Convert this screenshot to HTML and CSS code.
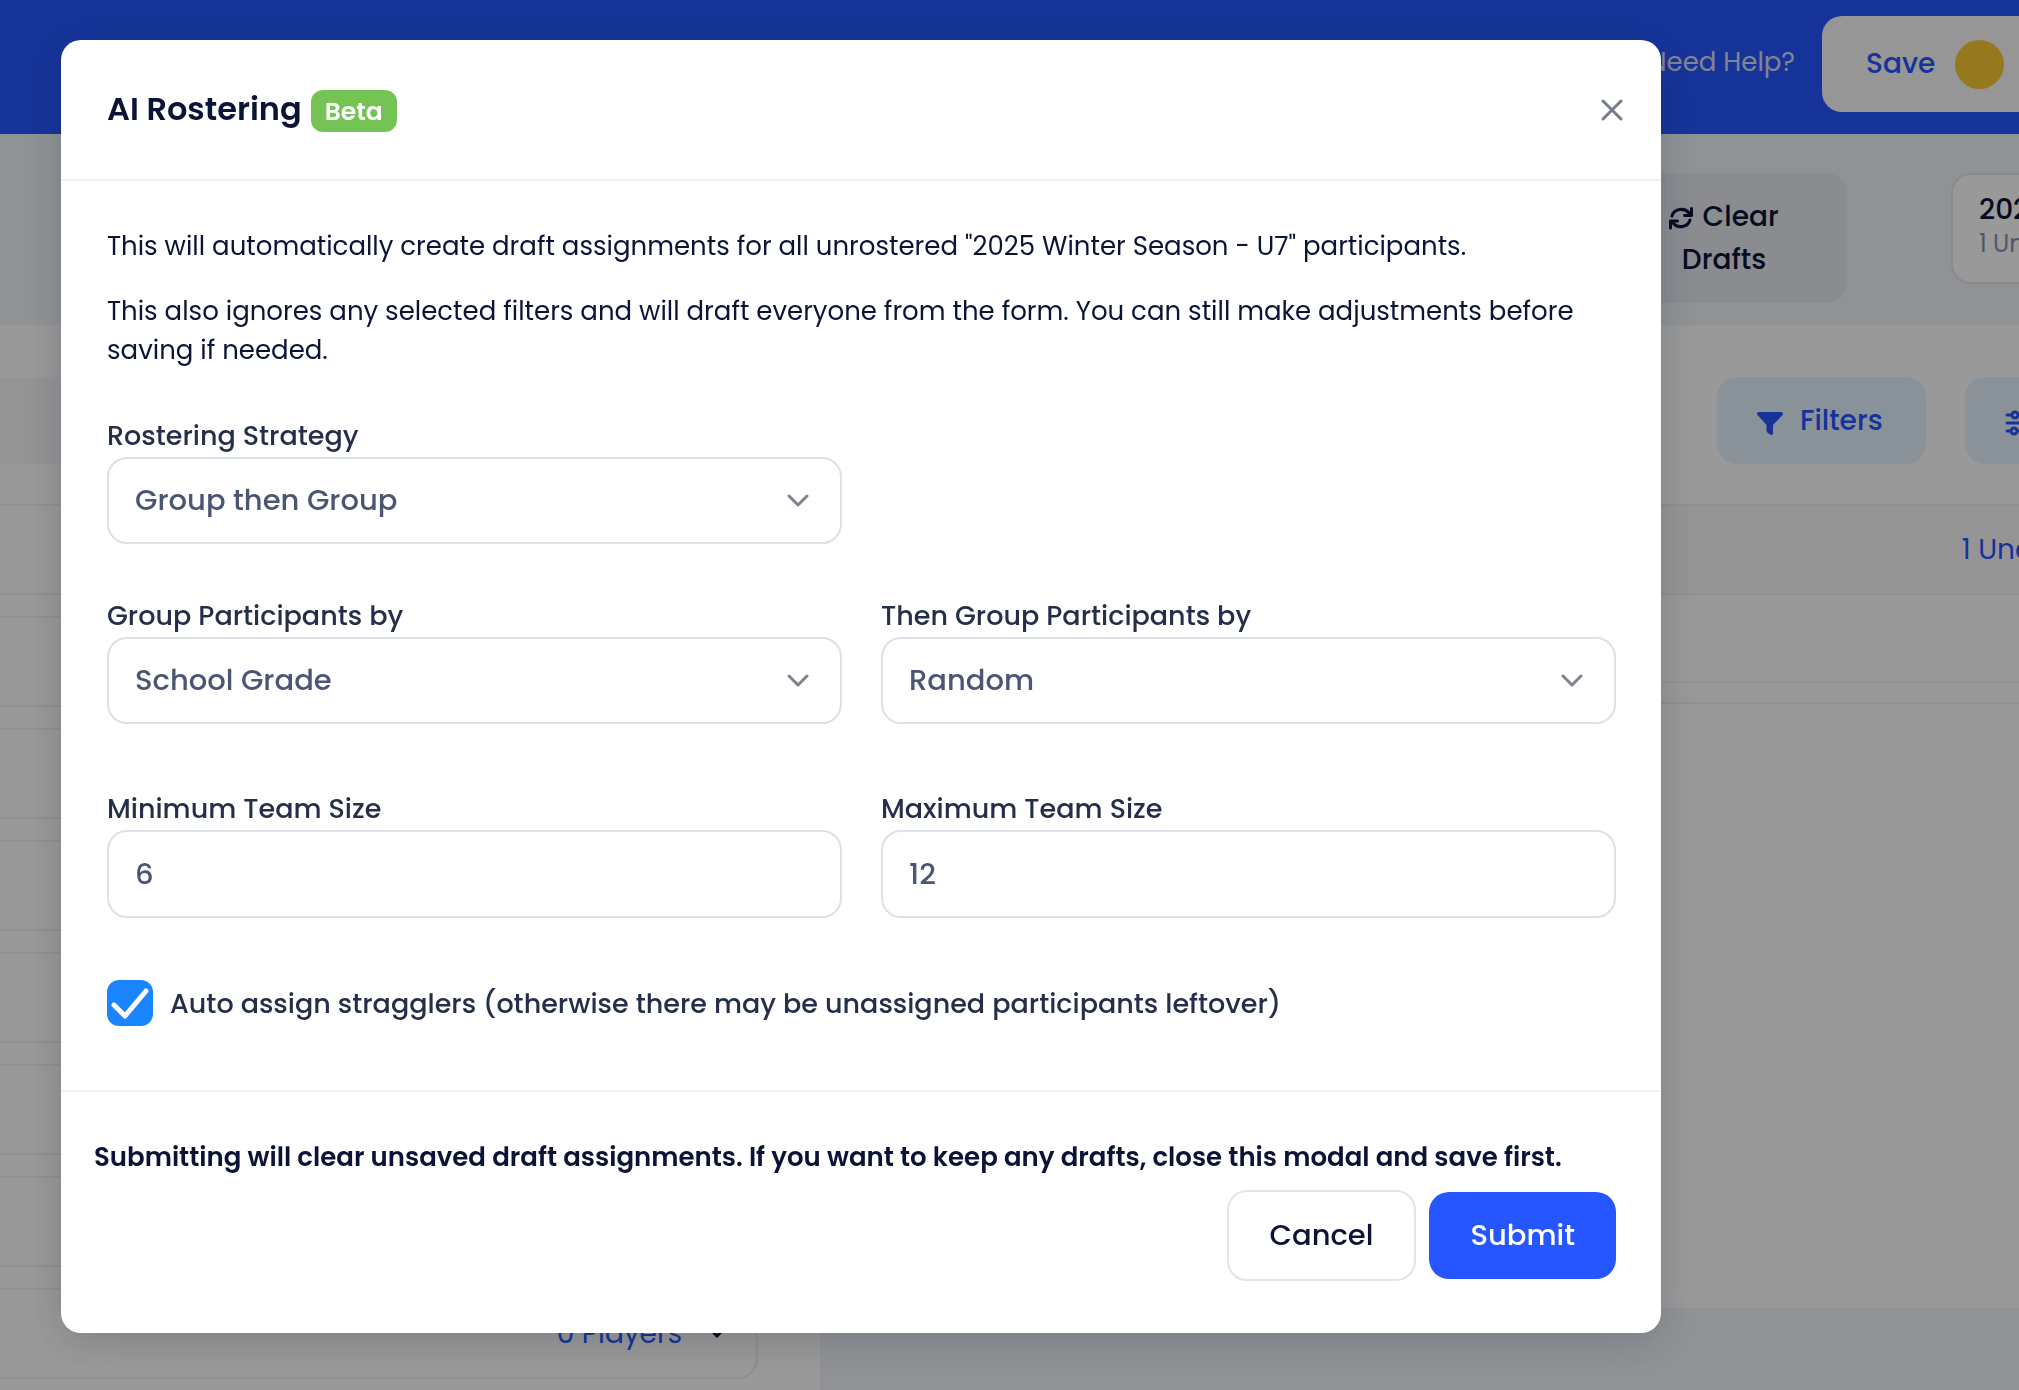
FILE: index.html
```html
<!DOCTYPE html>
<html lang="en">
<head>
    <meta charset="UTF-8">
    <meta name="viewport" content="width=device-width, initial-scale=1.0">
    <title>AI Rostering</title>
    <link rel="stylesheet" href="styles.css">
</head>
<body>
    <div class="page">
        <header class="topbar">
            <a href="#" class="help">Need Help?</a>
            <button type="button" class="save">Save <span class="dot"></span></button>
        </header>
        <div class="toolbar">
            <button type="button" class="clear">
                <svg width="24" height="24" viewBox="0 0 24 24" fill="none" stroke="currentColor" stroke-width="3" stroke-linecap="round" stroke-linejoin="round">
                    <path d="M3 10a9.500 8.500 0 0 1 17-3l2 2M22.500 2.500v7h-7M21 14a9.500 8.500 0 0 1-17 3l-2-2M1.500 22v-7h7"/>
                </svg>
                Clear Drafts
            </button>
            <div class="team-card">
                <strong>2025 Winter</strong>
                <span>1 Undrafted</span>
            </div>
        </div>
        <div class="columns">
            <div class="teams">
                <div class="teams-head"></div>
                <div class="team"></div>
                <div class="team"></div>
                <div class="team"></div>
                <div class="team"></div>
                <div class="team"></div>
                <div class="team"></div>
                <div class="team"></div>
                <div class="team">
                    <a href="#">0 Players</a>
                    <svg width="16" height="10" viewBox="0 0 16 10" fill="none" stroke="currentColor" stroke-width="3">
                        <path d="M2 1l6 6 6-6"/>
                    </svg>
                </div>
            </div>
            <div class="players">
                <div class="actions">
                    <button type="button" class="action">
                        <svg width="26" height="23" viewBox="0 0 26 23" fill="currentColor">
                            <path d="M2 0h22c2 0 2.500 2 1.500 3L16 13v8c0 2-1.500 2.500-3 1.500l-2-1.500c-1-1-1.500-1-1.500-3v-5L.5 3C-.5 2 0 0 2 0z"/>
                        </svg>
                        Filters
                    </button>
                    <button type="button" class="action">
                        <svg width="26" height="26" viewBox="0 0 26 26" fill="none" stroke="currentColor" stroke-width="3" stroke-linecap="round">
                            <path d="M2 5h4M14 5h10M2 13h22M2 21h3M13 21h11"/>
                            <circle cx="10" cy="5" r="3"/>
                            <circle cx="9" cy="21" r="3"/>
                        </svg>
                        Fields
                    </button>
                </div>
                <div class="group-row"><a href="#">1 Undrafted</a></div>
                <div class="player-row"></div>
                <div class="player-end"></div>
            </div>
        </div>
    </div>

    <div class="overlay">
        <form class="modal" role="dialog" aria-labelledby="modal-title">
            <div class="modal-header">
                <h2 id="modal-title">AI Rostering</h2>
                <span class="badge">Beta</span>
                <button type="button" class="close" aria-label="Close">
                    <svg width="22" height="22" viewBox="0 0 22 22" fill="none" stroke="currentColor" stroke-width="3" stroke-linecap="round">
                        <path d="M2 2l18 18M20 2L2 20"/>
                    </svg>
                </button>
            </div>
            <div class="modal-body">
                <p>This will automatically create draft assignments for all unrostered "2025 Winter Season - U7" participants.</p>
                <p>This also ignores any selected filters and will draft everyone from the form. You can still make adjustments before saving if needed.</p>
                <div class="form-row first">
                    <div class="form-group">
                        <label for="strategy">Rostering Strategy</label>
                        <div class="select">
                            <select id="strategy">
                                <option>Group then Group</option>
                            </select>
                            <svg width="22" height="14" viewBox="0 0 22 14" fill="none" stroke="currentColor" stroke-width="3" stroke-linecap="round" stroke-linejoin="round">
                                <path d="M2 2l9 9 9-9"/>
                            </svg>
                        </div>
                    </div>
                </div>
                <div class="form-row">
                    <div class="form-group">
                        <label for="group">Group Participants by</label>
                        <div class="select">
                            <select id="group">
                                <option>School Grade</option>
                            </select>
                            <svg width="22" height="14" viewBox="0 0 22 14" fill="none" stroke="currentColor" stroke-width="3" stroke-linecap="round" stroke-linejoin="round">
                                <path d="M2 2l9 9 9-9"/>
                            </svg>
                        </div>
                    </div>
                    <div class="form-group">
                        <label for="then">Then Group Participants by</label>
                        <div class="select">
                            <select id="then">
                                <option>Random</option>
                            </select>
                            <svg width="22" height="14" viewBox="0 0 22 14" fill="none" stroke="currentColor" stroke-width="3" stroke-linecap="round" stroke-linejoin="round">
                                <path d="M2 2l9 9 9-9"/>
                            </svg>
                        </div>
                    </div>
                </div>
                <div class="form-row sizes">
                    <div class="form-group">
                        <label for="min">Minimum Team Size</label>
                        <input type="number" id="min" value="6">
                    </div>
                    <div class="form-group">
                        <label for="max">Maximum Team Size</label>
                        <input type="number" id="max" value="12">
                    </div>
                </div>
                <div class="check">
                    <span class="box">
                        <input type="checkbox" id="stragglers" checked>
                        <svg width="46" height="46" viewBox="0 0 46 46" fill="none" stroke="#fff" stroke-width="5" stroke-linecap="round" stroke-linejoin="round">
                            <path d="M7 25l11 11 21-25"/>
                        </svg>
                    </span>
                    <label for="stragglers">Auto assign stragglers (otherwise there may be unassigned participants leftover)</label>
                </div>
            </div>
            <div class="modal-footer">
                <p>Submitting will clear unsaved draft assignments. If you want to keep any drafts, close this modal and save first.</p>
                <div class="button-group">
                    <button type="button" class="cancel">Cancel</button>
                    <button type="submit" class="submit">Submit</button>
                </div>
            </div>
        </form>
    </div>
</body>
</html>
```

FILE: styles.css
```css
* {
    box-sizing: border-box;
}
body {
    margin: 0;
    height: 100vh;
    overflow: hidden;
    font-family: Poppins, Inter, sans-serif;
    font-size: 26px;
    line-height: 39px;
    color: #0b1437;
    background-color: #f1f4f8;
}
h2, p {
    margin: 0;
}
a {
    color: #2556ff;
    text-decoration: none;
}
button, input, select {
    font: inherit;
    color: inherit;
}
button {
    border: none;
    cursor: pointer;
}
svg {
    flex: none;
}

/* page behind the modal, wider than the window */
.page {
    width: calc(100% + 160px);
}
.topbar {
    display: flex;
    justify-content: flex-end;
    align-items: center;
    gap: 27px;
    height: 134px;
    padding: 0 40px 6px;
    background-color: #2556ff;
}
.help {
    padding-bottom: 3px;
    color: #d5dcf5;
}
.save {
    display: flex;
    align-items: center;
    gap: 20px;
    width: 317px;
    height: 96px;
    padding: 0 44px;
    border-radius: 20px;
    background-color: #fafafa;
    color: #2556ff;
    font-size: 28px;
    font-weight: 500;
    line-height: 36px;
}
.dot {
    width: 49px;
    height: 49px;
    border-radius: 50%;
    background-color: #fbc832;
}
.toolbar {
    display: flex;
    justify-content: flex-end;
    align-items: flex-start;
    gap: 104px;
    height: 191px;
    padding: 39px 40px 0;
}
.clear {
    width: 246px;
    height: 130px;
    padding: 0 50px;
    border-radius: 20px;
    background-color: #e6e9f0;
    font-size: 28px;
    font-weight: 500;
    line-height: 43px;
}
.clear svg {
    margin-right: 2px;
    vertical-align: -4px;
}
.team-card {
    display: flex;
    flex-direction: column;
    width: 188px;
    height: 111px;
    padding: 17px 26px;
    border: 2px solid #e2e6ee;
    border-radius: 20px;
    background-color: #fff;
    font-size: 28px;
    line-height: 36px;
    white-space: nowrap;
}
.team-card strong {
    font-weight: 500;
}
.team-card span {
    color: #8490b5;
    font-size: 24px;
    line-height: 32px;
}
.columns {
    display: flex;
    align-items: flex-start;
}
.teams {
    flex: 0 0 820px;
    display: flex;
    flex-direction: column;
    gap: 21px;
    padding-bottom: 40px;
    background-color: #fff;
}
.teams-head {
    height: 87px;
    margin: 52px 62px 19px 0;
    background-color: #f7f7f9;
}
.team {
    display: flex;
    align-items: center;
    justify-content: flex-end;
    gap: 27px;
    height: 91px;
    margin-right: 62px;
    padding-right: 31px;
    border: 2px solid #eceef2;
    border-left: none;
    border-radius: 0 20px 20px 0;
    font-size: 28px;
}
.players {
    flex: 1;
    height: 983px;
    background-color: #fff;
}
.actions {
    display: flex;
    justify-content: flex-end;
    gap: 39px;
    padding: 52px 40px 40px;
}
.action {
    display: flex;
    align-items: center;
    gap: 17px;
    width: 209px;
    height: 87px;
    padding: 0 40px;
    border-radius: 20px;
    background-color: #e7f4ff;
    color: #2556ff;
    font-size: 28px;
    font-weight: 500;
}
.action svg {
    margin-top: 5px;
}
.actions .action:last-child {
    width: 174px;
}
.group-row {
    display: flex;
    justify-content: flex-end;
    align-items: center;
    height: 91px;
    padding-right: 58px;
    border: 2px solid #eceef2;
    background-color: #f9f9fa;
    font-size: 28px;
}
.player-row {
    height: 88px;
    border-bottom: 2px solid #f2f4f6;
}
.player-end {
    height: 21px;
    border-bottom: 2px solid #eceef2;
}

/* modal */
.overlay {
    position: fixed;
    inset: 0;
    padding: 40px 358px 40px 61px;
    background-color: rgba(0, 0, 0, 0.4);
}
.modal {
    border-radius: 20px;
    background-color: #fff;
    box-shadow: 0 8px 40px rgba(20, 30, 50, 0.2);
}
.modal-header {
    display: flex;
    align-items: center;
    gap: 9px;
    height: 141px;
    padding: 0 38px 0 46px;
    border-bottom: 2px solid #f0f1f2;
}
.modal-header h2 {
    padding-bottom: 2px;
    font-size: 32px;
    font-weight: 600;
}
.badge {
    margin-top: 2px;
    padding: 2px 14px 1px;
    border-radius: 12px;
    background-color: #74c353;
    color: #fff;
    font-size: 25px;
    font-weight: 600;
}
.close {
    display: flex;
    margin-left: auto;
    padding: 0;
    background: none;
    color: #747b8a;
}
.modal-body {
    padding: 46px 45px 64px 46px;
}
.modal-body p {
    margin-bottom: 26px;
}
.form-row {
    display: grid;
    grid-template-columns: 1fr 1fr;
    gap: 39px;
    margin-bottom: 51px;
}
.form-row.first {
    margin-top: 45px;
}
.form-row.sizes {
    margin-top: 64px;
    margin-bottom: 62px;
}
.form-group label {
    display: block;
    line-height: 42px;
}
.form-group label, .check label {
    color: #252f4a;
    font-size: 27px;
    font-weight: 500;
}
.form-group input, .form-group select {
    display: block;
    width: 100%;
    height: 87px;
    padding: 0 26px;
    border: 2px solid #dce1e6;
    border-radius: 20px;
    background-color: #fff;
    color: #4b5675;
    font-size: 29px;
    font-weight: 500;
    appearance: none;
}
.form-group input {
    height: 88px;
    appearance: textfield;
}
.select {
    position: relative;
}
.select svg {
    position: absolute;
    top: 37px;
    right: 33px;
    color: #7d838c;
    pointer-events: none;
}
.check {
    display: flex;
    align-items: center;
    gap: 17px;
}
.box {
    position: relative;
    height: 46px;
}
.box input {
    display: block;
    width: 46px;
    height: 46px;
    margin: 0;
    border-radius: 12px;
    background-color: #1b84ff;
    appearance: none;
}
.box svg {
    position: absolute;
    inset: 0;
    pointer-events: none;
}
.modal-footer {
    padding: 46px 45px 52px 33px;
    border-top: 2px solid #f0f1f2;
}
.modal-footer p {
    font-weight: 600;
}
.button-group {
    display: flex;
    justify-content: flex-end;
    align-items: center;
    gap: 13px;
    margin-top: 13px;
}
.button-group button {
    height: 87px;
    padding: 0 41px;
    border-radius: 20px;
    font-size: 29px;
    font-weight: 500;
}
.button-group .cancel {
    height: 91px;
    border: 2px solid #e1e5f0;
    background-color: #fff;
}
.button-group .submit {
    background-color: #2556ff;
    color: #fff;
}
```
